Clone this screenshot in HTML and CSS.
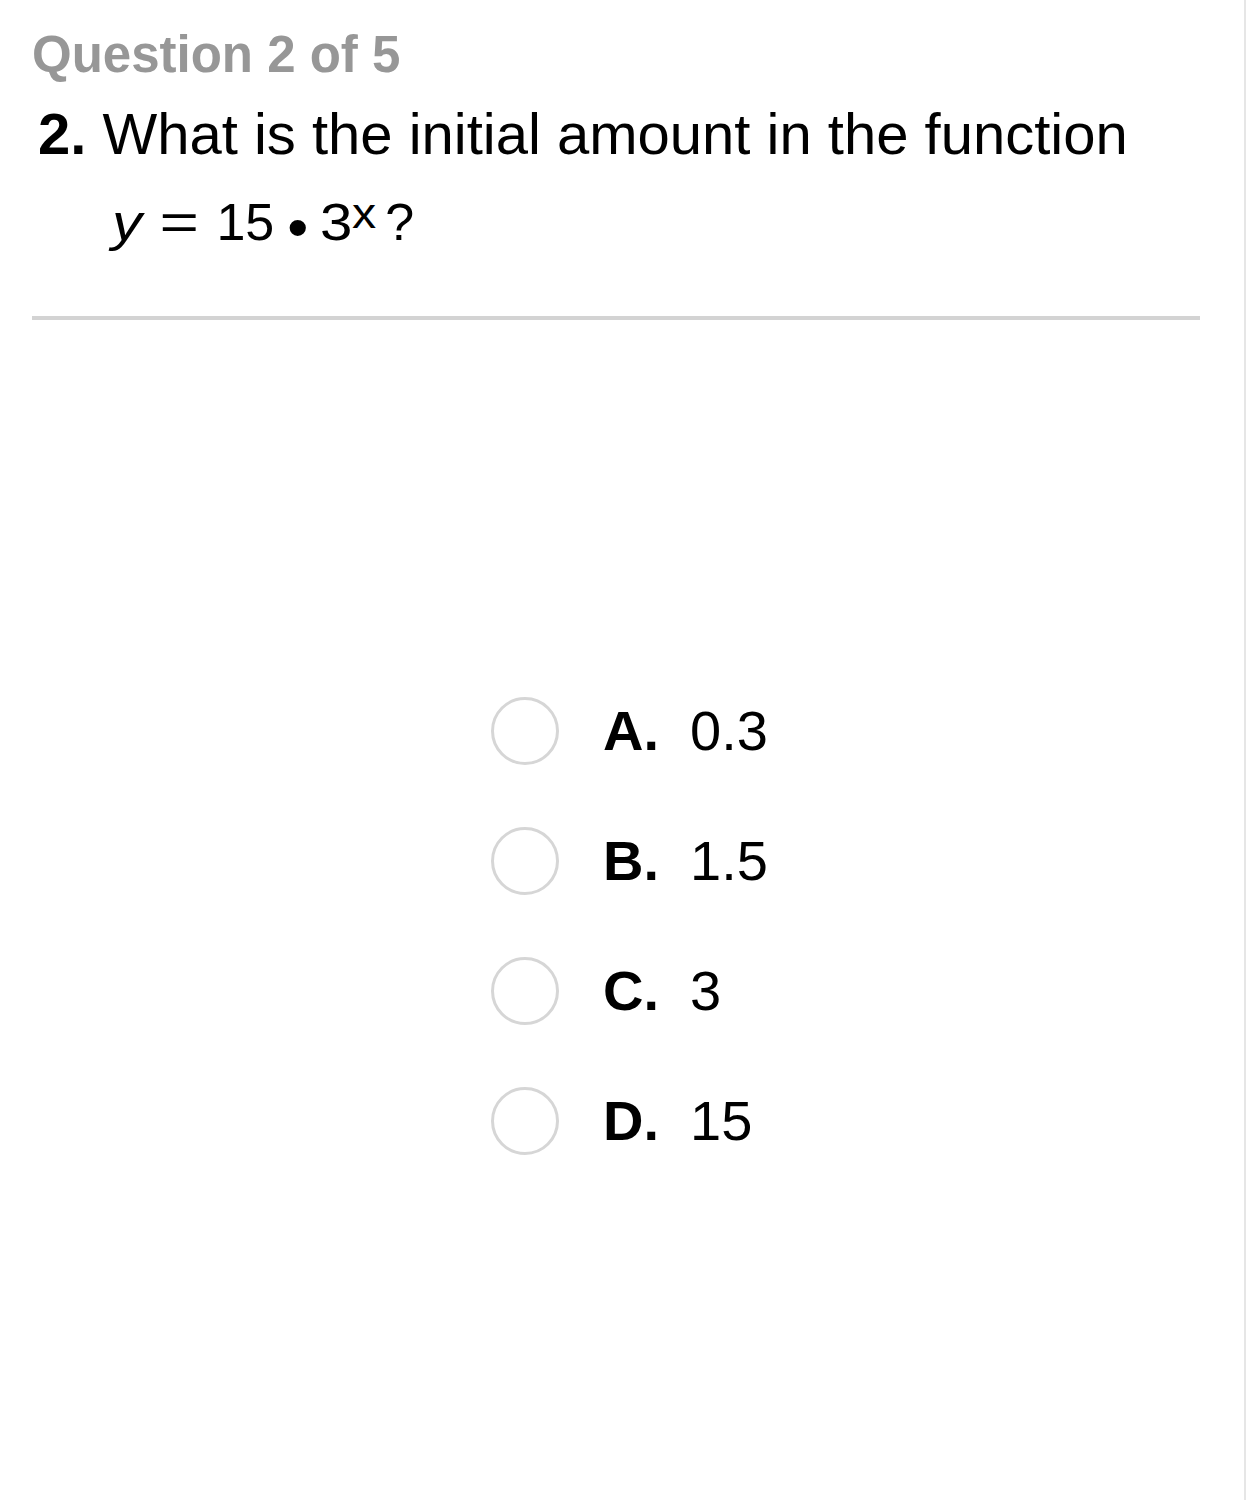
FILE: index.html
```html
<!DOCTYPE html>
<html>
<head>
<meta charset="utf-8">
<link rel="stylesheet" href="styles.css">
</head>
<body>
<div class="page">
  <div class="content">
    <div class="title">Question 2 of 5</div>
    <div class="question"><b>2.</b> What is the initial amount in the function</div>
    <div class="equation"><i class="var">y</i><span class="op">=</span><span class="num">15</span><span class="dot">•</span><span class="num3">3</span><sup class="exp">x</sup><span class="qm">?</span></div>
    <div class="divider"></div>
    <div class="options">
      <div class="option"><span class="radio"></span><span class="letter">A.</span><span class="value">0.3</span></div>
      <div class="option"><span class="radio"></span><span class="letter">B.</span><span class="value">1.5</span></div>
      <div class="option"><span class="radio"></span><span class="letter">C.</span><span class="value">3</span></div>
      <div class="option"><span class="radio"></span><span class="letter">D.</span><span class="value">15</span></div>
    </div>
  </div>
</div>
</body>
</html>
```

FILE: styles.css
```css
html, body {
  margin: 0;
  padding: 0;
  background: #ffffff;
}
body {
  font-family: "Liberation Sans", Arial, sans-serif;
  color: #000000;
}
.page {
  width: 1244px;
  min-height: 1500px;
  border-right: 2px solid #e6e6e6;
  box-sizing: content-box;
}
.content {
  padding: 29px 44px 0 32px;
}
.title {
  font-size: 51px;
  line-height: 51px;
  font-weight: bold;
  color: #979797;
}
.question {
  margin-top: 25px;
  padding-left: 6px;
  font-size: 58px;
  line-height: 57px;
  white-space: nowrap;
}
.question b {
  font-weight: bold;
}
.equation {
  margin-top: 34px;
  padding-left: 80px;
  font-size: 52px;
  line-height: 52px;
  white-space: nowrap;
}
.var {
  display: inline-block;
  font-style: italic;
  transform: scaleX(1.15);
  transform-origin: left center;
}
.op {
  display: inline-block;
  margin-left: 26px;
  transform: scaleX(1.3);
}
.num {
  margin-left: 22px;
}
.dot {
  font-size: 60px;
  line-height: 0;
  vertical-align: -8px;
  margin-left: 13px;
}
.num3 {
  display: inline-block;
  margin-left: 12px;
  transform: scaleX(1.12);
  transform-origin: left center;
}
.exp {
  display: inline-block;
  font-size: 42px;
  line-height: 0;
  vertical-align: 12px;
  margin-left: 3px;
  transform: scaleX(1.15);
  transform-origin: left center;
}
.qm {
  margin-left: 12px;
}
.divider {
  margin-top: 68px;
  height: 4px;
  background: #d3d3d3;
}
.options {
  margin-top: 377px;
  padding-left: 459px;
  display: flex;
  flex-direction: column;
  gap: 62px;
}
.option {
  display: flex;
  align-items: center;
  height: 68px;
}
.radio {
  width: 62px;
  height: 62px;
  border: 3px solid #d6d6d6;
  border-radius: 50%;
  flex: none;
}
.letter {
  margin-left: 44px;
  width: 87px;
  font-size: 56px;
  line-height: 56px;
  font-weight: bold;
}
.value {
  font-size: 56px;
  line-height: 56px;
}
```
